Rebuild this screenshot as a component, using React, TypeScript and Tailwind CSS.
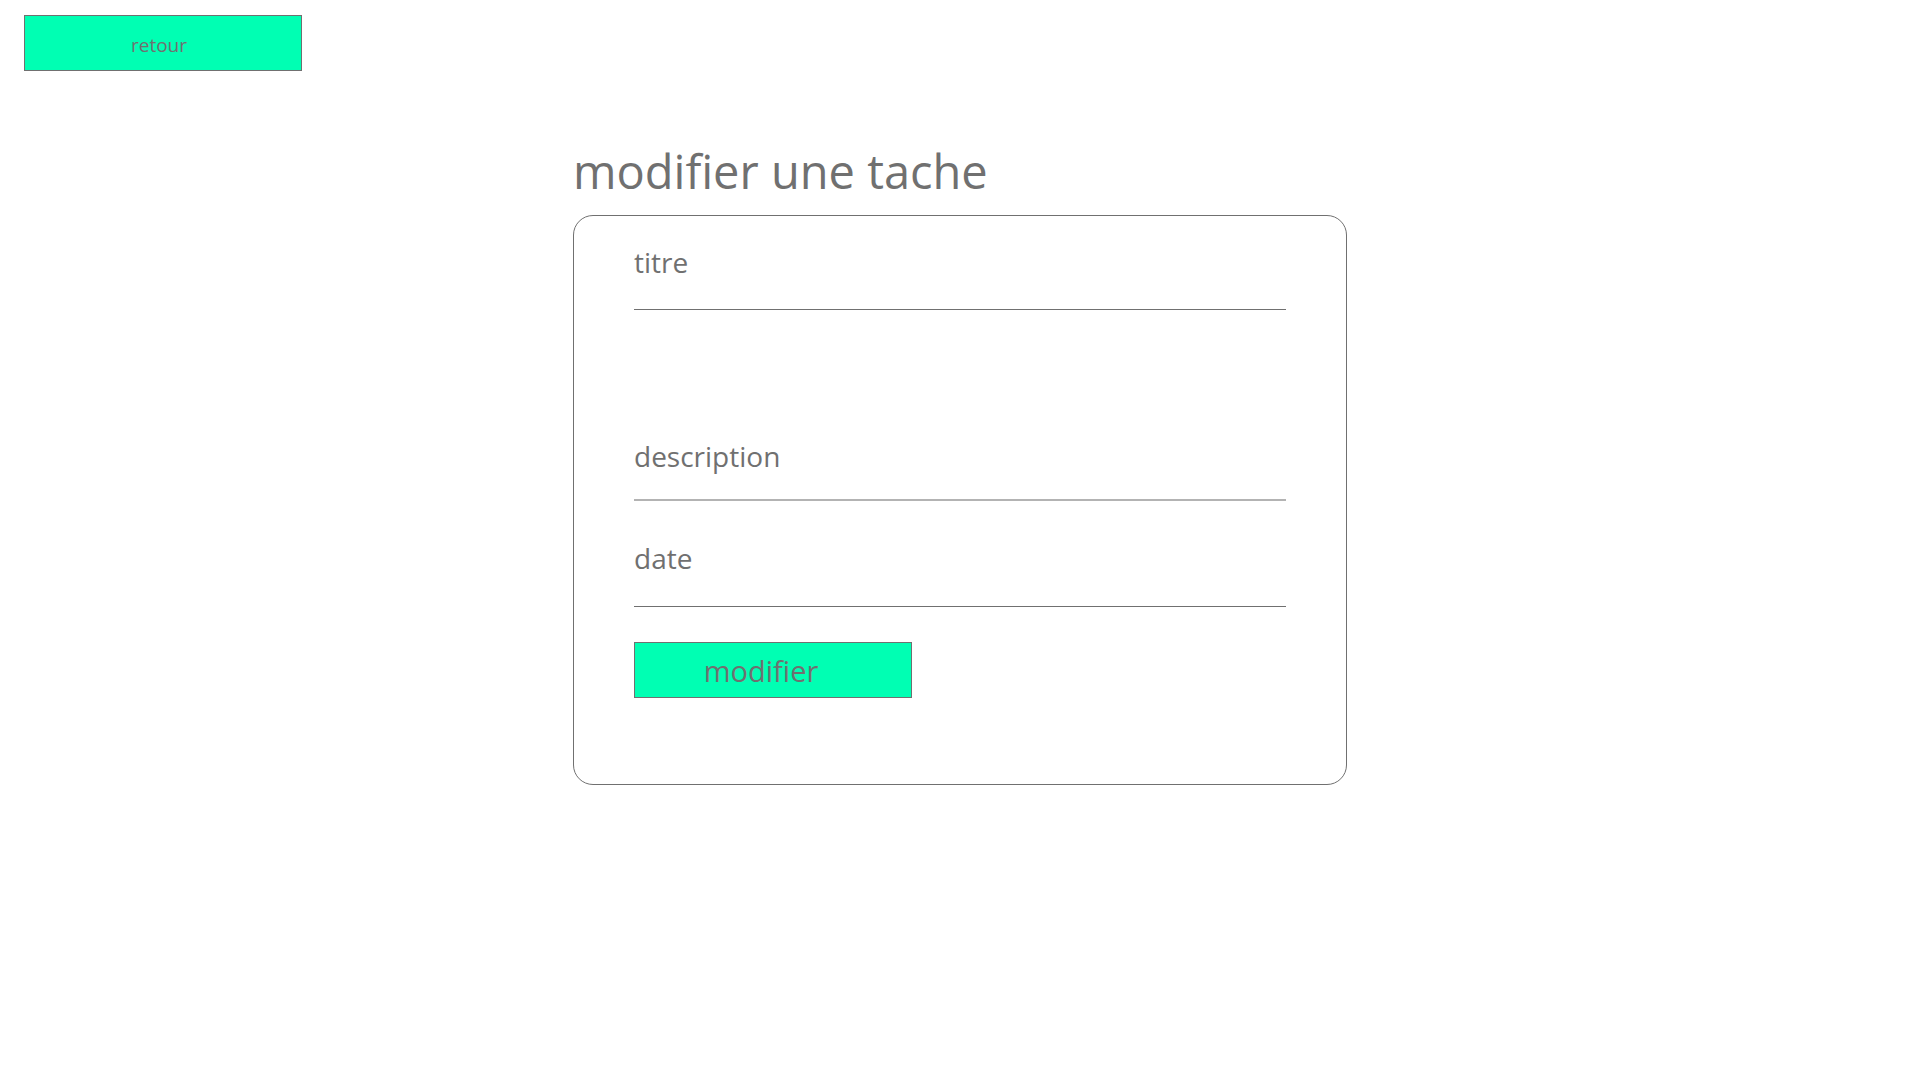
import React from "react";

export default function App() {
  return (
    <div
      className="min-h-screen bg-white text-[#707070]"
      style={{ fontFamily: '"Open Sans", "Noto Sans", sans-serif' }}
    >
      <div className="pt-[15px] pl-[24px]">
        <button className="flex h-[56px] w-[278px] items-center justify-center border border-[#707070] bg-[#00ffb3] pr-[8px] pt-[3px] text-[19px] leading-[26px] text-[#707070]">
          retour
        </button>
      </div>

      <div className="mx-auto w-[774px]">
        <h1 className="mt-[68px] text-[47px] font-normal leading-[64px] text-[#707070]">
          modifier une tache
        </h1>

        <div className="mt-[12px] h-[570px] rounded-[20px] border border-[#707070] px-[60px] pt-[26px]">
          <div className="h-[68px] border-b border-[#707070]">
            <div className="text-[28px] leading-[40px]">titre</div>
          </div>

          <div className="mt-[126px] h-[65px] border-b-2 border-[#b3b3b3]">
            <div className="text-[28px] leading-[40px]">description</div>
          </div>

          <div className="mt-[37px] h-[69px] border-b border-[#707070]">
            <div className="text-[28px] leading-[40px]">date</div>
          </div>

          <button className="mt-[35px] flex h-[56px] w-[278px] items-center justify-center border border-[#707070] bg-[#00ffb3] pr-[24px] pt-[2px] text-[29px] leading-[40px] text-[#707070]">
            modifier
          </button>
        </div>
      </div>
    </div>
  );
}
